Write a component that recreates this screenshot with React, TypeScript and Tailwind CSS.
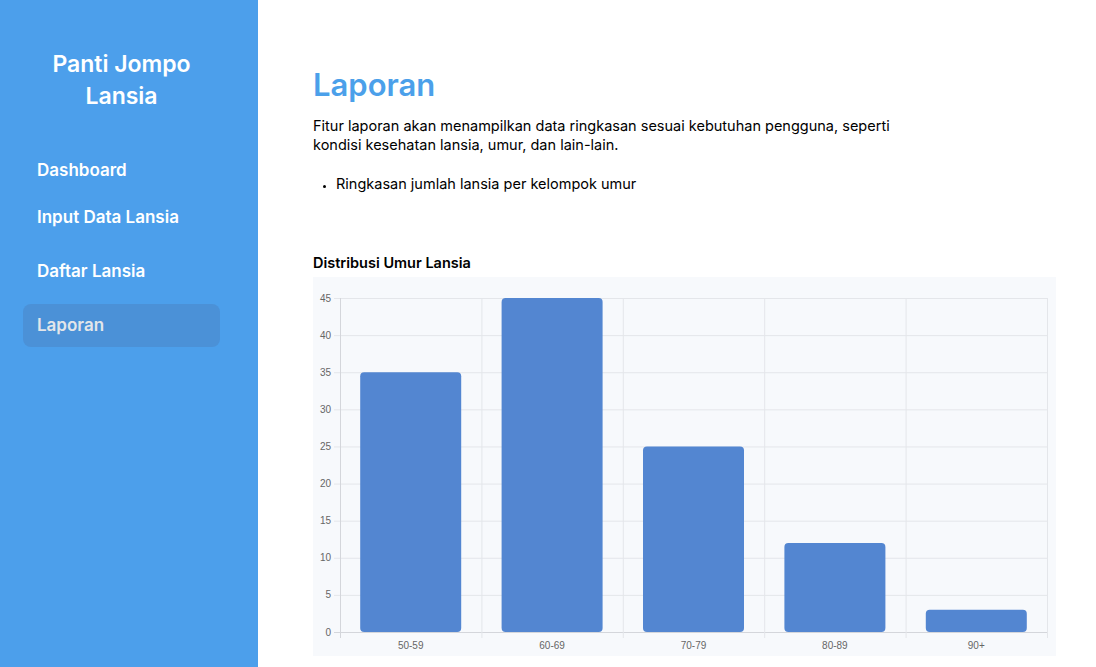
import React from "react"

const data = [
  { label: "50-59", value: 35 },
  { label: "60-69", value: 45 },
  { label: "70-79", value: 25 },
  { label: "80-89", value: 12 },
  { label: "90+", value: 3 },
]

const menu = [
  { name: "Dashboard", mt: "mt-0" },
  { name: "Input Data Lansia", mt: "mt-[4px]" },
  { name: "Daftar Lansia", mt: "mt-[11px]" },
  { name: "Laporan", mt: "mt-[11px]", active: true },
]

function AgeChart() {
  const W = 743
  const H = 379
  const left = 27
  const right = 734
  const top = 21
  const zero = 355
  const max = 45
  const step = (right - left) / data.length
  const y = (v: number) => zero - ((zero - top) * v) / max
  const ticks = [0, 5, 10, 15, 20, 25, 30, 35, 40, 45]

  return (
    <svg width={W} height={H} viewBox={`0 0 ${W} ${H}`} className="block">
      {ticks.map((t) => (
        <g key={t}>
          <line x1={left - 6} x2={right} y1={y(t) + 0.5} y2={y(t) + 0.5} stroke={t === 0 ? "#d4d6db" : "#e4e6ea"} strokeWidth={1} />
          <text x={left - 9} y={y(t) + 3.5} textAnchor="end" fontSize={10} fill="#666" fontFamily="'Liberation Sans', Arial, sans-serif">
            {t}
          </text>
        </g>
      ))}
      {Array.from({ length: data.length + 1 }).map((_, i) => (
        <line key={i} x1={left + step * i + 0.5} x2={left + step * i + 0.5} y1={top} y2={zero + 6} stroke={i === 0 ? "#d4d6db" : "#e4e6ea"} strokeWidth={1} />
      ))}
      {data.map((d, i) => {
        const bw = 101
        const x = left + step * i + (step - bw) / 2
        const yt = y(d.value)
        return (
          <g key={d.label}>
            <rect x={x} y={yt} width={bw} height={zero - yt} rx={4} fill="#5386d1" />
            <text x={left + step * i + step / 2} y={372} textAnchor="middle" fontSize={10} fill="#666" fontFamily="'Liberation Sans', Arial, sans-serif">
              {d.label}
            </text>
          </g>
        )
      })}
    </svg>
  )
}

export default function App() {
  return (
    <div className="flex h-screen w-full bg-white font-['Inter',sans-serif] text-black">
      <aside className="h-full w-[258px] shrink-0 bg-[#4c9feb] pl-[23px] pt-[48px]">
        <div className="w-[197px]">
          <h1 className="text-center text-[23px] font-semibold leading-[32px] text-white">
            Panti Jompo
            <br />
            Lansia
          </h1>
          <nav className="mt-[37px] flex flex-col">
            {menu.map((m) => (
              <a
                key={m.name}
                href="#"
                className={`${m.mt} flex h-[43px] items-center rounded-lg px-[14px] text-[17px] font-semibold ${
                  m.active ? "bg-[#4b91d7] text-[#e2e6ea]" : "text-white"
                }`}
              >
                {m.name}
              </a>
            ))}
          </nav>
        </div>
      </aside>

      <main className="flex-1 pl-[55px] pr-[40px] pt-[64px]">
        <h2 className="text-[31px] font-semibold leading-[42px] text-[#4ba0ea]">Laporan</h2>
        <p className="mt-[10px] max-w-[600px] text-[14.5px] leading-[19px]">
          Fitur laporan akan menampilkan data ringkasan sesuai kebutuhan pengguna, seperti kondisi kesehatan lansia, umur, dan lain-lain.
        </p>
        <ul className="mt-[20px] list-disc pl-[23px] text-[14.5px] leading-[19px] marker:text-[10px]">
          <li>Ringkasan jumlah lansia per kelompok umur</li>
        </ul>

        <h3 className="mt-[60px] text-[14.5px] font-semibold leading-[20px]">Distribusi Umur Lansia</h3>
        <div className="mt-[4px] w-[743px] bg-[#f7f9fc]">
          <AgeChart />
        </div>
      </main>
    </div>
  )
}
